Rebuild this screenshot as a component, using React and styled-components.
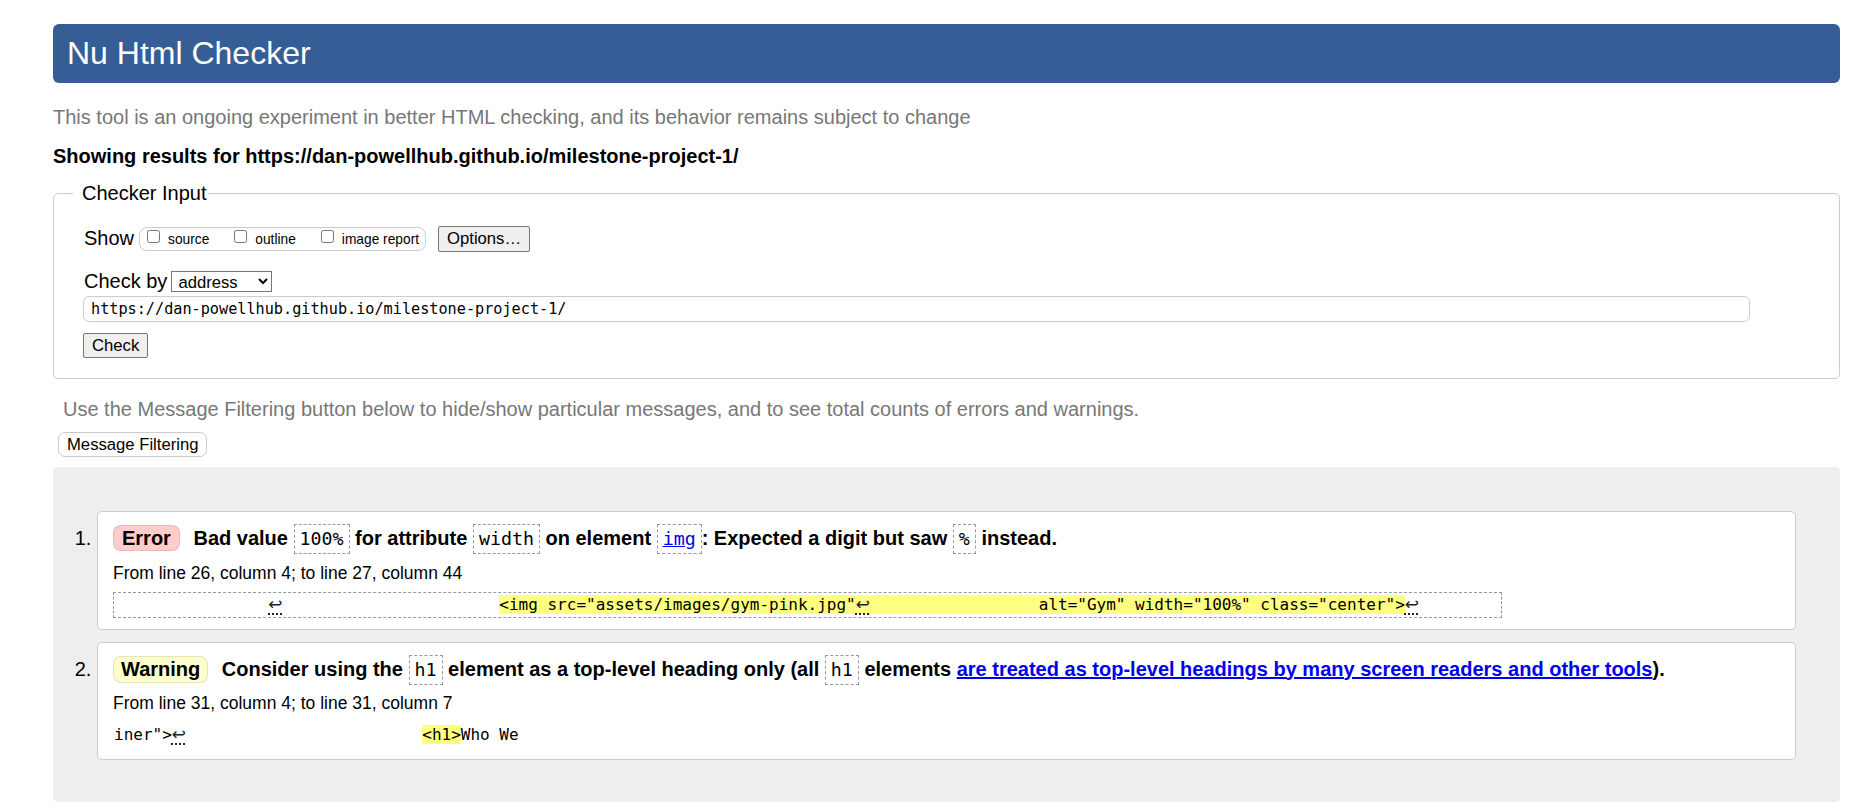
import React from 'react';
import styled, { createGlobalStyle } from 'styled-components';

const GlobalStyle = createGlobalStyle`
  body {
    margin: 0;
    background: #fff;
    color: #000;
    font-family: 'Liberation Sans', Arial, sans-serif;
  }
`;

const sp = (n) => ' '.repeat(n);

const Page = styled.div`
  padding: 24px 36px 0 53px;
  font-size: 20px;
`;

const Title = styled.h1`
  margin: 0;
  padding: 0 14px;
  height: 59px;
  line-height: 59px;
  font-size: 32px;
  font-weight: normal;
  color: #fff;
  background: #365d95;
  border-radius: 6px;
`;

const Note = styled.p`
  margin: ${(p) => (p.$second ? '18px 0 0' : '22px 0 0')};
  padding-left: ${(p) => (p.$second ? '10px' : '0')};
  line-height: 24px;
  color: #777;
`;

const Showing = styled.p`
  margin: 15px 0 0;
  line-height: 24px;
  font-weight: bold;
`;

const Fieldset = styled.fieldset`
  margin: 13px 0 0;
  padding: 0;
  min-width: 0;
  border: 1px solid #ccc;
  border-radius: 5px;
`;

const Legend = styled.legend`
  margin-left: 19px;
  padding: 0 1px 0 9px;
  line-height: 24px;
  font-size: 20px;
`;

const FieldBody = styled.div`
  padding: 21px 0 20px 30px;
`;

const Row = styled.div`
  display: flex;
  align-items: center;
  height: ${(p) => p.$h}px;
  margin-top: ${(p) => p.$mt || 0}px;
`;

const RowLabel = styled.span`
  padding-bottom: ${(p) => p.$pb || 0}px;
  line-height: 20px;
`;

const Pill = styled.div`
  display: flex;
  align-items: center;
  gap: 25px;
  box-sizing: border-box;
  height: 24px;
  margin-left: 5px;
  padding: 0 6px 0 7px;
  border: 1px solid #ccc;
  border-radius: 8px;
  background: #fff;
`;

const Check = styled.label`
  display: flex;
  align-items: center;
  font-size: 13.75px;
`;

const Box = styled.input.attrs({ type: 'checkbox' })`
  width: 13px;
  height: 13px;
  margin: 0 8px 6px 0;
`;

const Button = styled.button`
  display: ${(p) => (p.$block ? 'block' : 'inline-block')};
  box-sizing: border-box;
  height: ${(p) => p.$h || 26}px;
  margin: ${(p) => p.$m || 0};
  padding: 0 8px;
  font-family: 'Liberation Sans', Arial, sans-serif;
  font-size: 16.67px;
  color: #000;
  background: ${(p) => (p.$plain ? '#fff' : '#efefef')};
  border: 1px solid ${(p) => (p.$plain ? '#ccc' : '#767676')};
  border-radius: ${(p) => (p.$plain ? '7px' : '2px')};
`;

const Select = styled.select`
  box-sizing: border-box;
  width: 101px;
  height: 21px;
  margin-left: 4px;
  padding: 0 0 0 2px;
  font-family: 'Liberation Sans', Arial, sans-serif;
  font-size: 16.67px;
  color: #000;
  background: #fff;
  border: 1px solid #767676;
  border-radius: 0;
`;

const UrlInput = styled.input`
  box-sizing: border-box;
  width: 1667px;
  height: 26px;
  margin: 4px 0 0 -1px;
  padding: 0 7px;
  font-family: 'DejaVu Sans Mono', monospace;
  font-size: 15.2px;
  color: #000;
  border: 1px solid #ccc;
  border-radius: 6px;
  outline: none;
`;

const Results = styled.div`
  margin-top: 10px;
  padding: 44px 44px 42px 0;
  background: #eee;
  border-radius: 5px;
`;

const List = styled.ol`
  margin: 0;
  padding-left: 44px;
`;

const Item = styled.li`
  padding: 11px 15px;
  background: #fff;
  border: 1px solid #ccc;
  border-radius: 5px;
  & + & {
    margin-top: 12px;
  }
`;

const Message = styled.p`
  margin: 0;
  line-height: 30px;
  font-weight: bold;
`;

const Badge = styled.strong`
  display: inline-block;
  margin-right: 8px;
  padding: 0 ${(p) => (p.$kind === 'error' ? 8 : 7)}px;
  line-height: ${(p) => (p.$kind === 'error' ? 24 : 25)}px;
  background: ${(p) => (p.$kind === 'error' ? '#fcc' : '#ffc')};
  border: 1px solid rgba(0, 0, 0, 0.1);
  border-radius: 8px;
`;

const Code = styled.code`
  display: inline-block;
  padding: 3px 5px;
  line-height: 22px;
  font-family: 'DejaVu Sans Mono', monospace;
  font-size: 18.3px;
  font-weight: normal;
  border: 1px dashed #999;
`;

const Link = styled.a`
  color: #0000ee;
  text-decoration: underline;
`;

const Location = styled.p`
  margin: 6.5px 0 0;
  line-height: 24px;
  font-size: 17.5px;
`;

const Extract = styled.code`
  display: block;
  width: fit-content;
  margin-top: 7px;
  line-height: 24px;
  font-family: 'DejaVu Sans Mono', monospace;
  font-size: 16px;
  white-space: pre;
  border: 1px dashed ${(p) => (p.$framed ? '#999' : 'transparent')};
`;

const Mark = styled.span`
  background: #ffff80;
`;

/* the line-break glyph takes one mono cell but draws wider, as in the original */
const Lf = styled.span`
  display: inline-block;
  width: 9.63px;
  line-height: 18px;
  font-family: 'DejaVu Sans', sans-serif;
  font-size: 17px;
  color: #222;
  white-space: nowrap;
  text-decoration: underline dotted #000;
  text-underline-offset: 4px;
`;

const LF = () => <Lf title='Line break'>↩</Lf>;

const App = () => {
  return (
    <Page>
      <GlobalStyle />
      <Title>Nu Html Checker</Title>
      <Note>
        This tool is an ongoing experiment in better HTML checking, and its behavior remains subject to change
      </Note>
      <Showing>Showing results for https://dan-powellhub.github.io/milestone-project-1/</Showing>

      <Fieldset>
        <Legend>Checker Input</Legend>
        <FieldBody>
          <Row $h={26}>
            <RowLabel $pb={3}>Show</RowLabel>
            <Pill>
              <Check>
                <Box />
                source
              </Check>
              <Check>
                <Box />
                outline
              </Check>
              <Check>
                <Box />
                image report
              </Check>
            </Pill>
            <Button $m='0 0 0 12px'>Options…</Button>
          </Row>
          <Row $h={21} $mt={19}>
            <RowLabel $pb={2}>Check by</RowLabel>
            <Select defaultValue='address'>
              <option value='address'>address</option>
              <option value='file'>file upload</option>
              <option value='text'>text input</option>
            </Select>
          </Row>
          <UrlInput defaultValue='https://dan-powellhub.github.io/milestone-project-1/' />
          <Button $block $h={25} $m='11px 0 0 -1px'>
            Check
          </Button>
        </FieldBody>
      </Fieldset>

      <Note $second>
        Use the Message Filtering button below to hide/show particular messages, and to see total counts of errors and warnings.
      </Note>
      <Button $block $plain $h={25} $m='11px 0 0 5px'>
        Message Filtering
      </Button>

      <Results>
        <List>
          <Item>
            <Message>
              <Badge $kind='error'>Error</Badge> Bad value <Code>100%</Code> for attribute <Code>width</Code> on
              element{' '}
              <Code>
                <Link href='#img'>img</Link>
              </Code>
              : Expected a digit but saw <Code>%</Code> instead.
            </Message>
            <Location>From line 26, column 4; to line 27, column 44</Location>
            <Extract $framed>
              {sp(16)}
              <LF />
              {sp(23)}
              <Mark>
                {'<img src="assets/images/gym-pink.jpg"'}
                <LF />
                {sp(18) + 'alt="Gym" width="100%" class="center">'}
              </Mark>
              <LF />
              {sp(9)}
            </Extract>
          </Item>
          <Item>
            <Message>
              <Badge $kind='warning'>Warning</Badge> Consider using the <Code>h1</Code> element as a top-level
              heading only (all <Code>h1</Code> elements{' '}
              <Link href='#headings'>are treated as top-level headings by many screen readers and other tools</Link>).
            </Message>
            <Location>From line 31, column 4; to line 31, column 7</Location>
            <Extract>
              {'iner">'}
              <LF />
              {sp(25)}
              <Mark>{'<h1>'}</Mark>
              {'Who We'}
            </Extract>
          </Item>
        </List>
      </Results>
    </Page>
  );
};

export default App;
